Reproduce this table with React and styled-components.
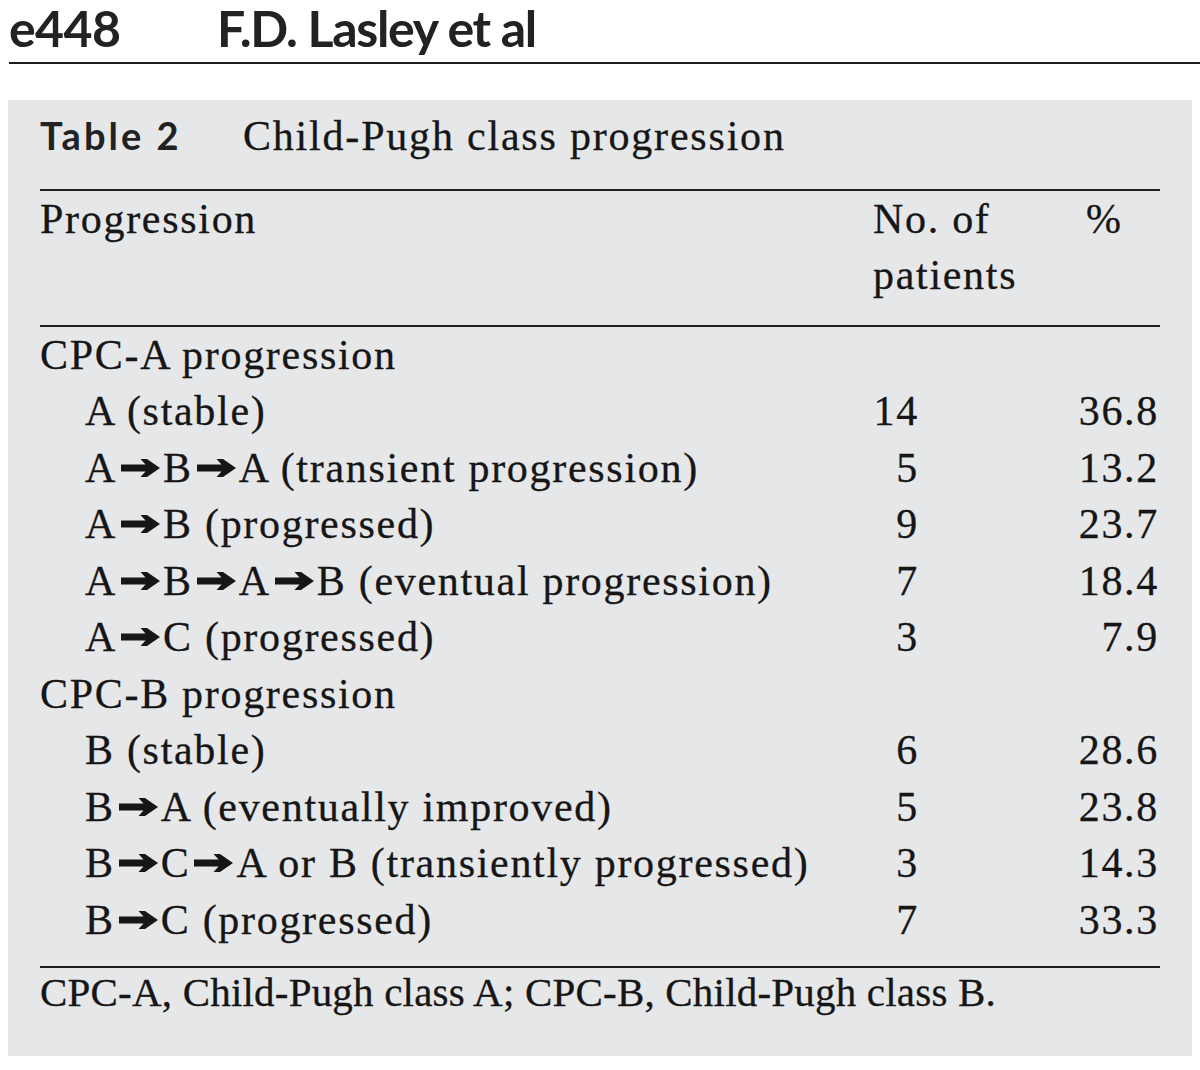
import styled, { createGlobalStyle } from "styled-components";

const GlobalStyle = createGlobalStyle`
  html, body {
    margin: 0;
    padding: 0;
    background: #ffffff;
  }
  body {
    color: #161616;
    font-family: "Liberation Serif", "Times New Roman", serif;
  }
`;

const ROWS = [
  { group: "CPC-A progression" },
  { path: ["A"], note: "(stable)", n: 14, pct: "36.8" },
  { path: ["A", "B", "A"], note: "(transient progression)", n: 5, pct: "13.2" },
  { path: ["A", "B"], note: "(progressed)", n: 9, pct: "23.7" },
  { path: ["A", "B", "A", "B"], note: "(eventual progression)", n: 7, pct: "18.4" },
  { path: ["A", "C"], note: "(progressed)", n: 3, pct: "7.9" },
  { group: "CPC-B progression" },
  { path: ["B"], note: "(stable)", n: 6, pct: "28.6" },
  { path: ["B", "A"], note: "(eventually improved)", n: 5, pct: "23.8" },
  { path: ["B", "C", "A or B"], note: "(transiently progressed)", n: 3, pct: "14.3" },
  { path: ["B", "C"], note: "(progressed)", n: 7, pct: "33.3" },
];

const Page = styled.div`
  padding-left: 8px;
`;

const RunningHead = styled.header`
  display: flex;
  align-items: baseline;
  height: 56px;
  line-height: 56px;
  font-family: Lato, "Open Sans", sans-serif;
  font-weight: 700;
  font-size: 50px;
  color: #222;
`;

const Folio = styled.span`
  width: 208px;
  padding-left: 1px;
  letter-spacing: -0.6px;
`;

const Authors = styled.span`
  letter-spacing: -1.3px;
`;

const HeadRule = styled.hr`
  border: 0;
  height: 2px;
  margin: 6px 0 0 1px;
  background: #1e1e1e;
`;

const Panel = styled.section`
  margin: 36px 8px 0 0;
  padding: 7px 32px 40px;
  background: #e6e7e9;
  -webkit-text-stroke: 0.3px currentColor;
`;

const Caption = styled.div`
  display: flex;
  align-items: baseline;
  line-height: 56.5px;
`;

const TableNo = styled.span`
  width: 203px;
  font-family: Lato, "Open Sans", sans-serif;
  font-weight: 700;
  font-size: 38px;
  letter-spacing: 3px;
  color: #222;
  -webkit-text-stroke: 0;
`;

const CaptionText = styled.span`
  font-size: 42px;
  letter-spacing: 1.8px;
`;

const Rule = styled.div`
  height: 2px;
  background: #1e1e1e;
  margin-top: ${({ $gap }) => $gap || 0}px;
`;

const Row = styled.div`
  display: grid;
  grid-template-columns: 1fr 203px 84px;
  font-size: 42px;
  letter-spacing: 1.7px;
  line-height: 56.5px;
`;

const HeadRow = styled(Row)`
  padding-bottom: 21px;
`;

const BodyRows = styled.div`
  padding-bottom: 18px;
`;

const Label = styled.div`
  padding-left: ${({ $indent }) => ($indent ? 45 : 0)}px;
  white-space: nowrap;
`;

const PctHead = styled.div`
  padding-left: 10px;
`;

const Count = styled.div`
  width: 46px;
  text-align: right;
`;

const Pct = styled.div`
  text-align: right;
  padding-right: 1px;
`;

const ArrowSvg = styled.svg`
  width: 39px;
  height: 18px;
  vertical-align: 5px;
  margin: 0 3px 0 4px;
  fill: #161616;
`;

const Footnote = styled.p`
  margin: 0;
  font-size: 41px;
  letter-spacing: 0.2px;
  line-height: 48px;
`;

const Arrow = () => (
  <ArrowSvg viewBox="0 0 39 18" aria-hidden="true">
    <path d="M0 5.6 H24.5 L19.5 0 H26 L39 9 L26 18 H19.5 L24.5 12.4 H0 Z" />
  </ArrowSvg>
);

const PathLabel = ({ path, note }) => (
  <Label $indent>
    {path.map((step, i) => (
      <span key={i}>
        {i > 0 && <Arrow />}
        {step}
      </span>
    ))}{" "}
    {note}
  </Label>
);

export default function App() {
  return (
    <Page>
      <GlobalStyle />
      <RunningHead>
        <Folio>e448</Folio>
        <Authors>F.D. Lasley et al</Authors>
      </RunningHead>
      <HeadRule />

      <Panel>
        <Caption>
          <TableNo>Table 2</TableNo>
          <CaptionText>Child-Pugh class progression</CaptionText>
        </Caption>
        <Rule $gap={24} />

        <HeadRow>
          <Label>Progression</Label>
          <div>
            No. of
            <br />
            patients
          </div>
          <PctHead>%</PctHead>
        </HeadRow>
        <Rule />

        <BodyRows>
          {ROWS.map((r, i) =>
            r.group ? (
              <Row key={i}>
                <Label>{r.group}</Label>
                <div />
                <div />
              </Row>
            ) : (
              <Row key={i}>
                <PathLabel path={r.path} note={r.note} />
                <Count>{r.n}</Count>
                <Pct>{r.pct}</Pct>
              </Row>
            )
          )}
        </BodyRows>
        <Rule />

        <Footnote>CPC-A, Child-Pugh class A; CPC-B, Child-Pugh class B.</Footnote>
      </Panel>
    </Page>
  );
}
